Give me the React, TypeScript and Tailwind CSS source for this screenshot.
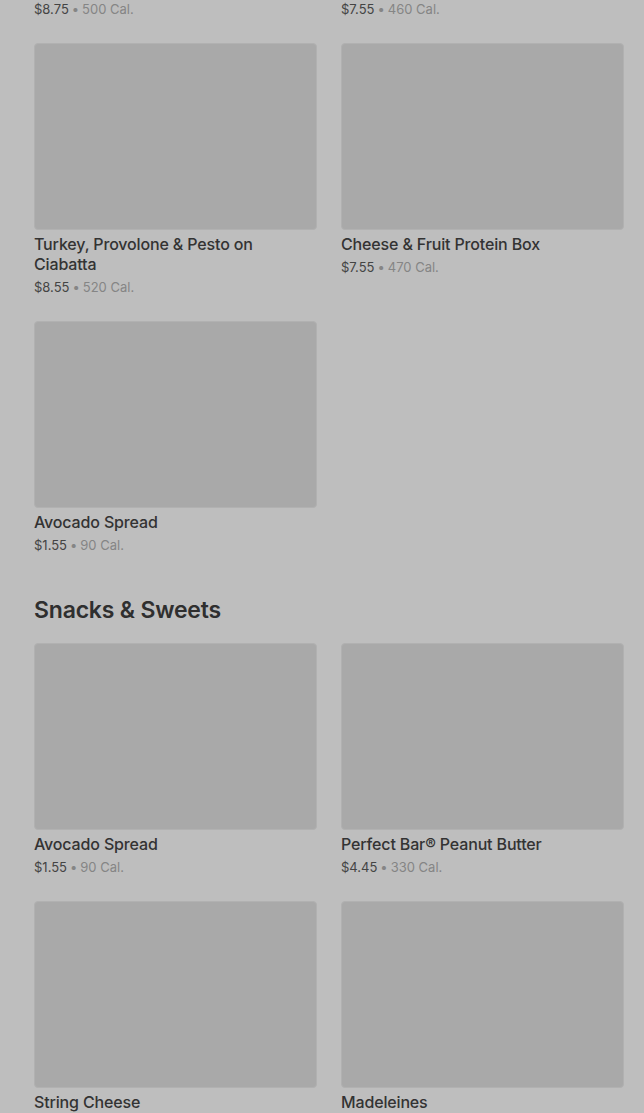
import React from 'react';

type Item = { name: string; price: string; cal: string };

const prev: Item[] = [
  { name: 'Chicken Caesar Wrap', price: '$8.75', cal: '500 Cal.' },
  { name: 'Hummus & Veggie Box', price: '$7.55', cal: '460 Cal.' },
];

const lunch: Item[] = [
  { name: 'Turkey, Provolone & Pesto on Ciabatta', price: '$8.55', cal: '520 Cal.' },
  { name: 'Cheese & Fruit Protein Box', price: '$7.55', cal: '470 Cal.' },
  { name: 'Avocado Spread', price: '$1.55', cal: '90 Cal.' },
];

const snacks: Item[] = [
  { name: 'Avocado Spread', price: '$1.55', cal: '90 Cal.' },
  { name: 'Perfect Bar® Peanut Butter', price: '$4.45', cal: '330 Cal.' },
  { name: 'String Cheese', price: '$1.25', cal: '80 Cal.' },
  { name: 'Madeleines', price: '$2.95', cal: '250 Cal.' },
];

const Card: React.FC<{ item: Item }> = ({ item }) => (
  <div className="flex flex-col">
    {/* Image placeholder */}
    <div className="h-[187px] w-full rounded-[4px] bg-[#a9a9a9] border border-[#b1b1b1]" />
    <div className="mt-[4px] text-[16px] leading-[20px] font-medium text-[#333333] tracking-[-0.15px]">
      {item.name}
    </div>
    <div className="mt-[3px] text-[13px] leading-[20px] text-[#858585]">
      <span className="text-[#444444]">{item.price}</span>
      <span className="mx-[3px]">•</span>
      {item.cal}
    </div>
  </div>
);

const Grid: React.FC<{ items: Item[] }> = ({ items }) => (
  <div className="grid grid-cols-2 gap-x-[24px] gap-y-[24px]">
    {items.map((it, i) => (
      <Card key={i} item={it} />
    ))}
  </div>
);

export default function App() {
  return (
    <div
      className="min-h-screen bg-[#bebebe] overflow-hidden"
      style={{ fontFamily: 'Inter, "Noto Sans", sans-serif' }}
    >
      <div className="pl-[34px] pr-[20px] -mt-[215px] pb-10">
        <div className="mb-[24px]">
          <Grid items={prev} />
        </div>
        <Grid items={lunch} />

        {/* Section */}
        <h2 className="mt-[39px] mb-[17px] text-[23px] leading-[32px] font-semibold text-[#2f2f2f] tracking-[-0.2px]">
          Snacks &amp; Sweets
        </h2>
        <Grid items={snacks} />
      </div>
    </div>
  );
}
